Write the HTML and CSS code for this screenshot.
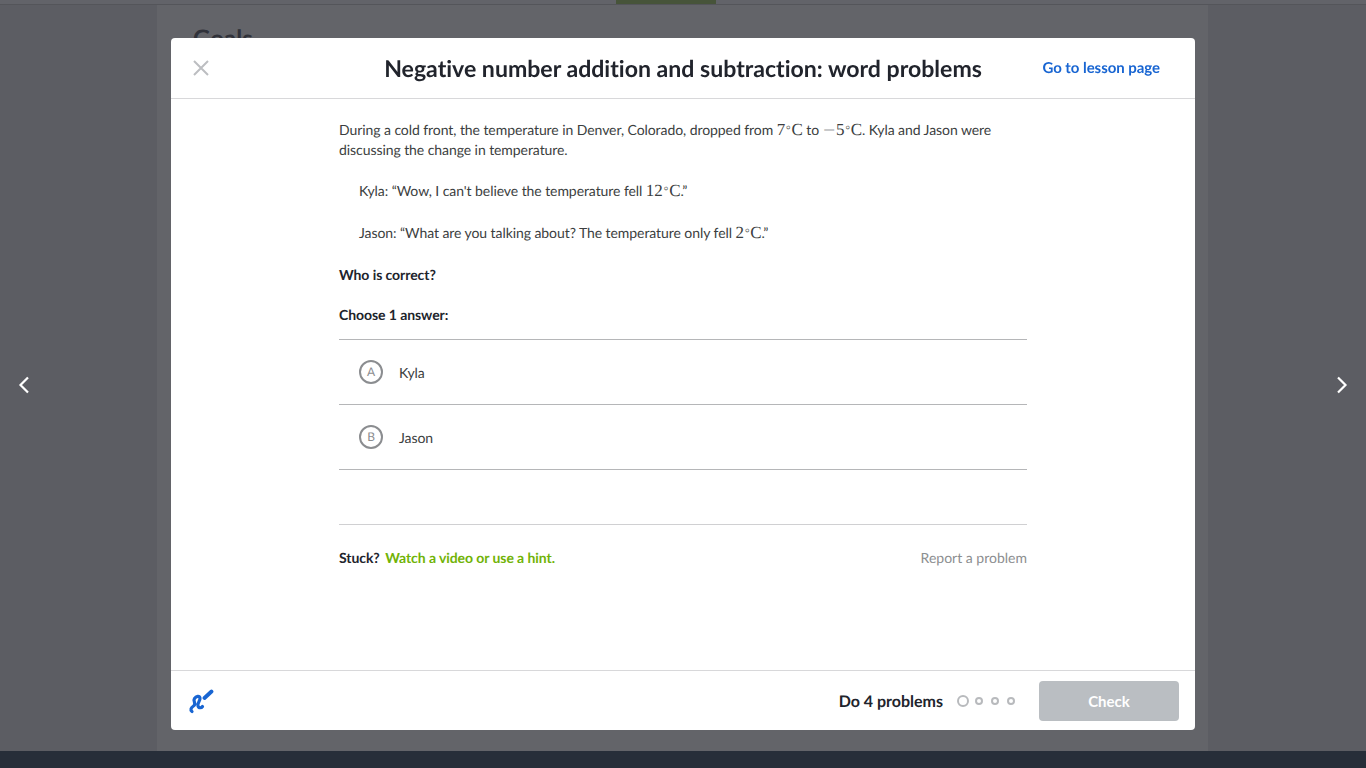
FILE: index.html
```html
<!DOCTYPE html>
<html lang="en">
<head>
    <meta charset="UTF-8">
    <meta name="viewport" content="width=device-width, initial-scale=1.0">
    <title>Negative number addition and subtraction: word problems</title>
    <link rel="stylesheet" href="styles.css">
</head>
<body>

    <!-- Page behind the dialog -->
    <div class="page">
        <div class="topbar"><div class="topbar-tab"></div></div>
        <div class="page-main">
            <div class="page-column">
                <h2 class="page-heading">Goals</h2>
            </div>
        </div>
        <div class="page-footer"></div>
    </div>

    <!-- Prev / next arrows -->
    <button class="nav-arrow nav-prev" aria-label="Previous">
        <svg width="12" height="18" viewBox="0 0 12 18"><path d="M10 1.500 2.500 9l7.500 7.500" fill="none" stroke="#fff" stroke-width="2.200"/></svg>
    </button>
    <button class="nav-arrow nav-next" aria-label="Next">
        <svg width="12" height="18" viewBox="0 0 12 18"><path d="M2 1.500 9.500 9 2 16.500" fill="none" stroke="#fff" stroke-width="2.200"/></svg>
    </button>

    <!-- Exercise dialog -->
    <div class="modal">
        <div class="modal-header">
            <button class="close-btn" aria-label="Close">
                <svg width="16" height="16" viewBox="0 0 16 16"><path d="M1 1l14 14M15 1 1 15" fill="none" stroke="#bcbec1" stroke-width="2"/></svg>
            </button>
            <h1 class="modal-title">Negative number addition and subtraction: word problems</h1>
            <a class="lesson-link" href="#">Go to lesson page</a>
        </div>

        <div class="modal-body">
            <div class="exercise">
                <p class="para">During a cold front, the temperature in Denver, Colorado, dropped from <span class="math">7<span class="deg">°</span>C</span> to <span class="math"><span class="minus">−</span>5<span class="deg">°</span>C</span>. Kyla and Jason were discussing the change in temperature.</p>
                <p class="quote">Kyla: “Wow, I can't believe the temperature fell <span class="math">12<span class="deg">°</span>C</span>.”</p>
                <p class="quote">Jason: “What are you talking about? The temperature only fell <span class="math">2<span class="deg">°</span>C</span>.”</p>
                <p class="question">Who is correct?</p>
                <p class="choose">Choose 1 answer:</p>

                <ul class="answers">
                    <li class="answer"><span class="answer-letter">A</span><span class="answer-text">Kyla</span></li>
                    <li class="answer"><span class="answer-letter">B</span><span class="answer-text">Jason</span></li>
                </ul>

                <div class="help-row">
                    <div><span class="stuck">Stuck?</span> <a class="hint-link" href="#">Watch a video or use a hint.</a></div>
                    <a class="report-link" href="#">Report a problem</a>
                </div>
            </div>
        </div>

        <div class="modal-footer">
            <svg class="scratch-icon" width="26" height="26" viewBox="0 0 26 26">
                <path d="M4 23.500C2 22 3 19.500 5.500 18 9 16 4.500 13.500 6.500 10.500 8 8 11.500 7.500 12 10 12.500 12.500 9 15 10 18 10.800 20.500 13.500 20 14.500 18.500" fill="none" stroke="#1865d2" stroke-width="3.200" stroke-linecap="round" stroke-linejoin="round"/>
                <path d="M16.500 10 23.500 3.500" fill="none" stroke="#1865d2" stroke-width="3.800" stroke-linecap="round"/>
            </svg>
            <div class="footer-right">
                <span class="do-count">Do 4 problems</span>
                <div class="dots">
                    <span class="dot dot-current"></span>
                    <span class="dot"></span>
                    <span class="dot"></span>
                    <span class="dot"></span>
                </div>
                <button class="check-btn">Check</button>
            </div>
        </div>
    </div>

</body>
</html>
```

FILE: styles.css
```css
/* Reset styles */
* {
    margin: 0;
    padding: 0;
    box-sizing: border-box;
}

body {
    font-family: 'Lato', 'Liberation Sans', sans-serif;
    font-variant-ligatures: none;
    text-rendering: geometricPrecision;
    color: #21242c;
    background: #5f6066;
    height: 100vh;
    overflow: hidden;
}

button {
    font-family: inherit;
    border: none;
    background: none;
}

a {
    text-decoration: none;
}

/* Page behind the dialog */
.page {
    height: 100%;
    display: flex;
    flex-direction: column;
}

.topbar {
    height: 5px;
    background: #626369;
    border-bottom: 1px solid #54555a;
    display: flex;
    justify-content: center;
}

.topbar-tab {
    width: 100px;
    height: 4px;
    background: #47543a;
    position: relative;
    left: -17px;
}

.page-main {
    flex: 1;
    background: #5c5d63;
    padding-left: 157px;
    padding-right: 158px;
}

.page-column {
    height: 100%;
    background: #636469;
    padding: 19px 36px;
}

.page-heading {
    font-size: 24px;
    font-weight: 700;
    color: #30323a;
}

.page-footer {
    height: 17px;
    background: #272e39;
}

/* Prev / next arrows */
.nav-arrow {
    position: fixed;
    top: 376px;
    width: 12px;
    height: 18px;
}

.nav-prev {
    left: 18px;
}

.nav-next {
    right: 18px;
}

/* Dialog */
.modal {
    position: fixed;
    top: 38px;
    left: 171px;
    width: 1024px;
    height: 692px;
    background: #fff;
    border-radius: 4px;
    display: flex;
    flex-direction: column;
}

.modal-header {
    height: 61px;
    border-bottom: 1px solid #d8d8da;
    display: flex;
    align-items: center;
    justify-content: center;
    position: relative;
}

.close-btn {
    position: absolute;
    left: 22px;
    top: 22px;
    width: 16px;
    height: 16px;
}

.modal-title {
    font-size: 23.1px;
    font-weight: 700;
    color: #21242c;
}

.lesson-link {
    position: absolute;
    right: 35px;
    top: 21px;
    font-size: 15px;
    font-weight: 700;
    letter-spacing: -0.05px;
    color: #1865d2;
}

.modal-body {
    flex: 1;
    display: flex;
    justify-content: center;
}

.exercise {
    width: 688px;
    padding-top: 21px;
    font-size: 14px;
    line-height: 20px;
    letter-spacing: -0.07px;
    color: #3b3e40;
}

.math {
    font-family: 'Liberation Serif', serif;
    font-size: 17px;
    line-height: 0;
}

.deg {
    font-family: 'DejaVu Sans', sans-serif;
    font-size: 13px;
    font-weight: 300;
    line-height: 0;
}

.minus {
    font-family: 'DejaVu Sans', sans-serif;
    font-size: 16px;
    font-weight: 300;
    line-height: 0;
    color: #21242c;
}

.quote {
    margin-top: 20px;
    padding-left: 20px;
    line-height: 22px;
}

.para {
    line-height: 20px;
}

.question {
    margin-top: 21px;
    font-weight: 700;
    color: #21242c;
}

.choose {
    margin-top: 20px;
    font-weight: 700;
    color: #21242c;
}

.answers {
    list-style: none;
    margin-top: 14px;
    border-top: 1px solid #b5b6b8;
}

.answer {
    height: 65px;
    border-bottom: 1px solid #b5b6b8;
    display: flex;
    align-items: center;
    gap: 16px;
    padding-left: 20px;
}

.answer-letter {
    width: 24px;
    height: 24px;
    border: 2px solid #8b8d90;
    border-radius: 50%;
    display: flex;
    align-items: center;
    justify-content: center;
    font-size: 12px;
    font-weight: 400;
    color: #8b8d90;
}

.answer-text {
    margin-top: 2px;
}

.help-row {
    margin-top: 54px;
    border-top: 1px solid #d0d0d2;
    padding-top: 23px;
    display: flex;
    justify-content: space-between;
}

.stuck {
    font-weight: 700;
    color: #21242c;
    margin-right: 2px;
}

.hint-link {
    font-weight: 700;
    color: #71b307;
}

.report-link {
    letter-spacing: 0;
    color: #8c8e90;
}

/* Dialog footer */
.modal-footer {
    height: 60px;
    border-top: 1px solid #d8d8da;
    display: flex;
    align-items: center;
    justify-content: space-between;
    padding-left: 17px;
    padding-right: 16px;
}

.footer-right {
    display: flex;
    align-items: center;
}

.do-count {
    margin-top: 2px;
    font-size: 16px;
    font-weight: 700;
    color: #21242c;
}

.dots {
    display: flex;
    align-items: center;
    gap: 8px;
    margin-left: 14px;
    margin-right: 24px;
}

.dot {
    width: 8px;
    height: 8px;
    border: 2px solid #b8babd;
    border-radius: 50%;
}

.dot-current {
    width: 12px;
    height: 12px;
    margin-right: -2px;
}

.check-btn {
    width: 140px;
    height: 40px;
    background: #babec2;
    border-radius: 4px;
    color: #fff;
    font-size: 15px;
    font-weight: 700;
}
```
